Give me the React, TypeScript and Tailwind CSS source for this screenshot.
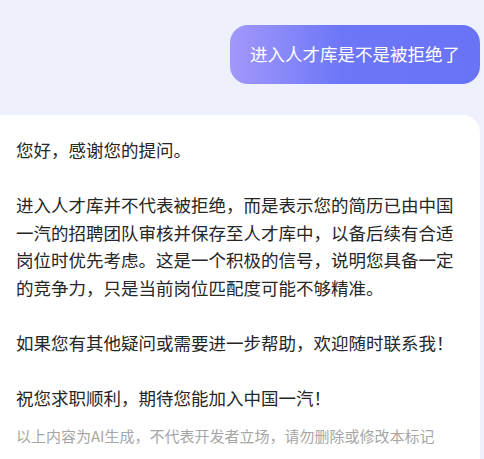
const answer = [
  '您好，感谢您的提问。',
  '',
  '进入人才库并不代表被拒绝，而是表示您的简历已由中国一汽的招聘团队审核并保存至人才库中，以备后续有合适岗位时优先考虑。这是一个积极的信号，说明您具备一定的竞争力，只是当前岗位匹配度可能不够精准。',
  '',
  '如果您有其他疑问或需要进一步帮助，欢迎随时联系我！',
  '',
  '祝您求职顺利，期待您能加入中国一汽！',
].join('\n');

export default function App() {
  return (
    <div
      className="w-[484px] h-[459px] overflow-hidden bg-[#eef1fc] pr-[4px] pt-[25px]"
      style={{ fontFamily: '"Noto Sans CJK SC", "Noto Sans", sans-serif' }}
    >
      <div className="flex justify-end">
        <div className="h-[59px] w-[250px] flex items-center justify-center rounded-[18px] bg-gradient-to-r from-[#a298fa] via-[#6d76f7] via-45% to-[#6873f6] text-[17.5px] text-white">
          进入人才库是不是被拒绝了
        </div>
      </div>

      <div className="mt-[31px] w-[480px] rounded-tr-[18px] bg-white px-4 pt-[21px] pb-6">
        <div className="whitespace-pre-wrap text-[17.5px] leading-[27.5px] text-[#262626]">
          {answer}
        </div>
        <div className="mt-[15px] text-[15px] leading-[20px] text-[#a6a6a6]">
          以上内容为AI生成，不代表开发者立场，请勿删除或修改本标记
        </div>
      </div>
    </div>
  );
}
